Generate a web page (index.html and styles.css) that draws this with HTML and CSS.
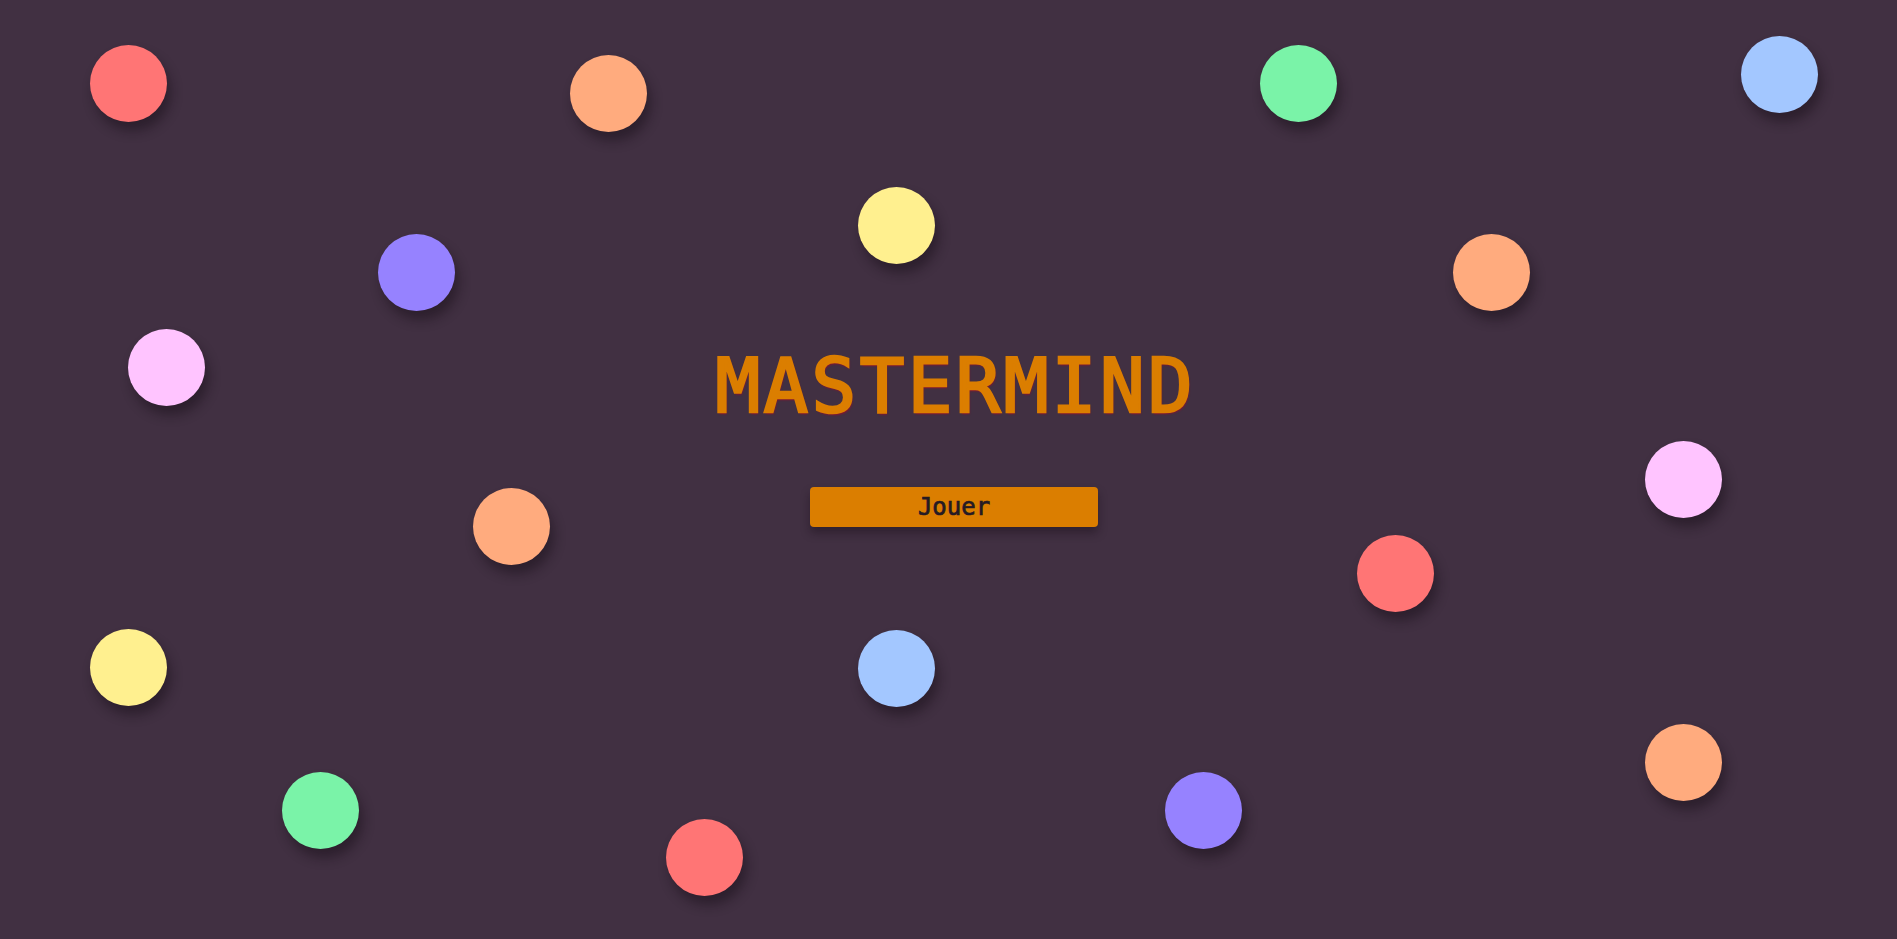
FILE: index.html
```html
<!DOCTYPE html>
<html lang="fr">
<head>
<meta charset="utf-8">
<title>Mastermind</title>
<link rel="stylesheet" href="styles.css">
</head>
<body>
<div class="stage">
  <div class="pegs">
    <span class="peg red" style="left:90px;top:45px"></span>
    <span class="peg orange" style="left:570px;top:55px"></span>
    <span class="peg green" style="left:1260px;top:45px"></span>
    <span class="peg blue" style="left:1741px;top:36px"></span>
    <span class="peg yellow" style="left:858px;top:187px"></span>
    <span class="peg purple" style="left:378px;top:234px"></span>
    <span class="peg orange" style="left:1453px;top:234px"></span>
    <span class="peg pink" style="left:128px;top:329px"></span>
    <span class="peg pink" style="left:1645px;top:441px"></span>
    <span class="peg orange" style="left:473px;top:488px"></span>
    <span class="peg red" style="left:1357px;top:535px"></span>
    <span class="peg yellow" style="left:90px;top:629px"></span>
    <span class="peg blue" style="left:858px;top:630px"></span>
    <span class="peg orange" style="left:1645px;top:724px"></span>
    <span class="peg green" style="left:282px;top:772px"></span>
    <span class="peg purple" style="left:1165px;top:772px"></span>
    <span class="peg red" style="left:666px;top:819px"></span>
  </div>
  <main class="menu">
    <h1 class="title">MASTERMIND</h1>
    <button class="play">Jouer</button>
  </main>
</div>
</body>
</html>
```
FILE: styles.css
```css
html, body {
  margin: 0;
  padding: 0;
  background: #413042;
  overflow: hidden;
}
.stage {
  position: relative;
  width: 100%;
  height: 939px;
}
.pegs {
  position: absolute;
  inset: 0;
}
.peg {
  position: absolute;
  width: 77px;
  height: 77px;
  border-radius: 50%;
  box-shadow: 4px 9px 12px rgba(20, 10, 20, 0.45);
}
.red { background: #ff7575; }
.orange { background: #ffab7e; }
.green { background: #7af3a8; }
.blue { background: #a3c7ff; }
.yellow { background: #fff08f; }
.purple { background: #9682ff; }
.pink { background: #ffc4ff; }

.menu {
  position: relative;
  display: flex;
  flex-direction: column;
  align-items: center;
  padding-top: 349px;
  padding-left: 11px;
}
.title {
  margin: 0;
  padding-left: 3.5px;
  font-family: "DejaVu Sans Mono", monospace;
  font-weight: normal;
  font-size: 74px;
  line-height: 74px;
  letter-spacing: 3.5px;
  color: #db7e00;
  text-shadow: 1px 2px 2px rgba(160, 10, 40, 0.85);
  -webkit-text-stroke: 2.6px #db7e00;
}
.play {
  margin-top: 64px;
  width: 288px;
  height: 40px;
  border: none;
  border-radius: 4px;
  background: #db7e00;
  color: #251a24;
  font-family: "DejaVu Sans Mono", monospace;
  font-weight: normal;
  font-size: 24px;
  -webkit-text-stroke: 0.7px #251a24;
  box-shadow: 0 6px 10px rgba(20, 10, 20, 0.4);
  cursor: pointer;
}
```
